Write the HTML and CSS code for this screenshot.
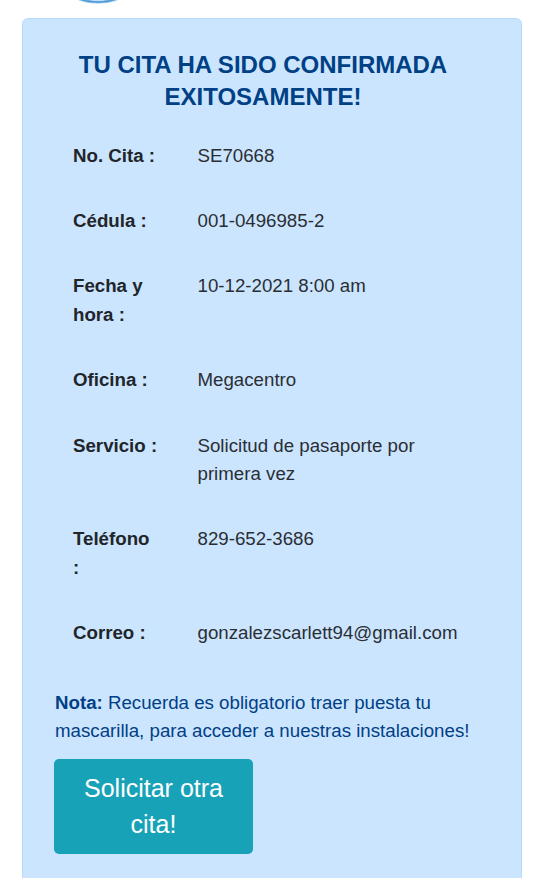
FILE: index.html
```html
<!DOCTYPE html>
<html lang="es">
<head>
<meta charset="utf-8">
<title>Cita confirmada</title>
<link rel="stylesheet" href="styles.css">
</head>
<body>
<header class="top">
  <svg class="logo" width="542" height="18" viewBox="0 0 542 18" aria-hidden="true">
    <circle cx="98" cy="-53" r="55" fill="#ffffff" stroke="#8cc2ea" stroke-width="3"/>
    <circle cx="98" cy="-53" r="55" fill="none" stroke="#4f9ad6" stroke-width="1.5"/>
  </svg>
</header>
<main class="card">
  <div class="content">
    <h1 class="title">TU CITA HA SIDO CONFIRMADA EXITOSAMENTE!</h1>
    <dl class="details">
      <div class="row"><dt>No. Cita :</dt><dd>SE70668</dd></div>
      <div class="row"><dt>Cédula :</dt><dd>001-0496985-2</dd></div>
      <div class="row"><dt>Fecha y hora :</dt><dd>10-12-2021 8:00 am</dd></div>
      <div class="row"><dt>Oficina :</dt><dd>Megacentro</dd></div>
      <div class="row"><dt>Servicio :</dt><dd>Solicitud de pasaporte por primera vez</dd></div>
      <div class="row"><dt>Teléfono :</dt><dd>829-652-3686</dd></div>
      <div class="row"><dt>Correo :</dt><dd>gonzalezscarlett94@gmail.com</dd></div>
    </dl>
    <p class="note"><strong>Nota:</strong> Recuerda es obligatorio traer puesta tu mascarilla, para acceder a nuestras instalaciones!</p>
    <a class="btn" href="#">Solicitar otra cita!</a>
  </div>
</main>
</body>
</html>
```
FILE: styles.css
```css
* { box-sizing: border-box; }
html, body { margin: 0; padding: 0; background: #ffffff; }
body {
  font-family: "Liberation Sans", Arial, sans-serif;
  font-size: 18.7px;
  color: #212529;
}
.top { height: 18px; }
.logo { display: block; }
.card {
  margin-left: 22px;
  width: 500px;
  background: #cce5ff;
  border: 1px solid #b8daff;
  border-radius: 6px;
  padding: 30px 0 60px 31px;
}
.content { width: 418px; }
.title {
  margin: 0;
  font-size: 24px;
  line-height: 31.5px;
  font-weight: 700;
  color: #004085;
  text-align: center;
}
.details {
  margin: 29.5px 0 0 19px;
  display: flex;
  flex-direction: column;
  gap: 36.9px;
}
.row {
  display: grid;
  grid-template-columns: 86px 1fr;
  column-gap: 38.5px;
  line-height: 28.5px;
}
.row dt { font-weight: 700; color: #212529; }
.row dd { margin: 0; color: #2a2e33; }
.note {
  margin: 41px 0 0 1px;
  line-height: 28px;
  color: #004085;
}
.note strong { font-weight: 700; }
.btn {
  display: block;
  margin-top: 14px;
  width: 199px;
  padding: 11px 16px;
  background: #17a2b8;
  color: #ffffff;
  text-decoration: none;
  text-align: center;
  font-size: 25px;
  line-height: 36.5px;
  border-radius: 5px;
}
```
